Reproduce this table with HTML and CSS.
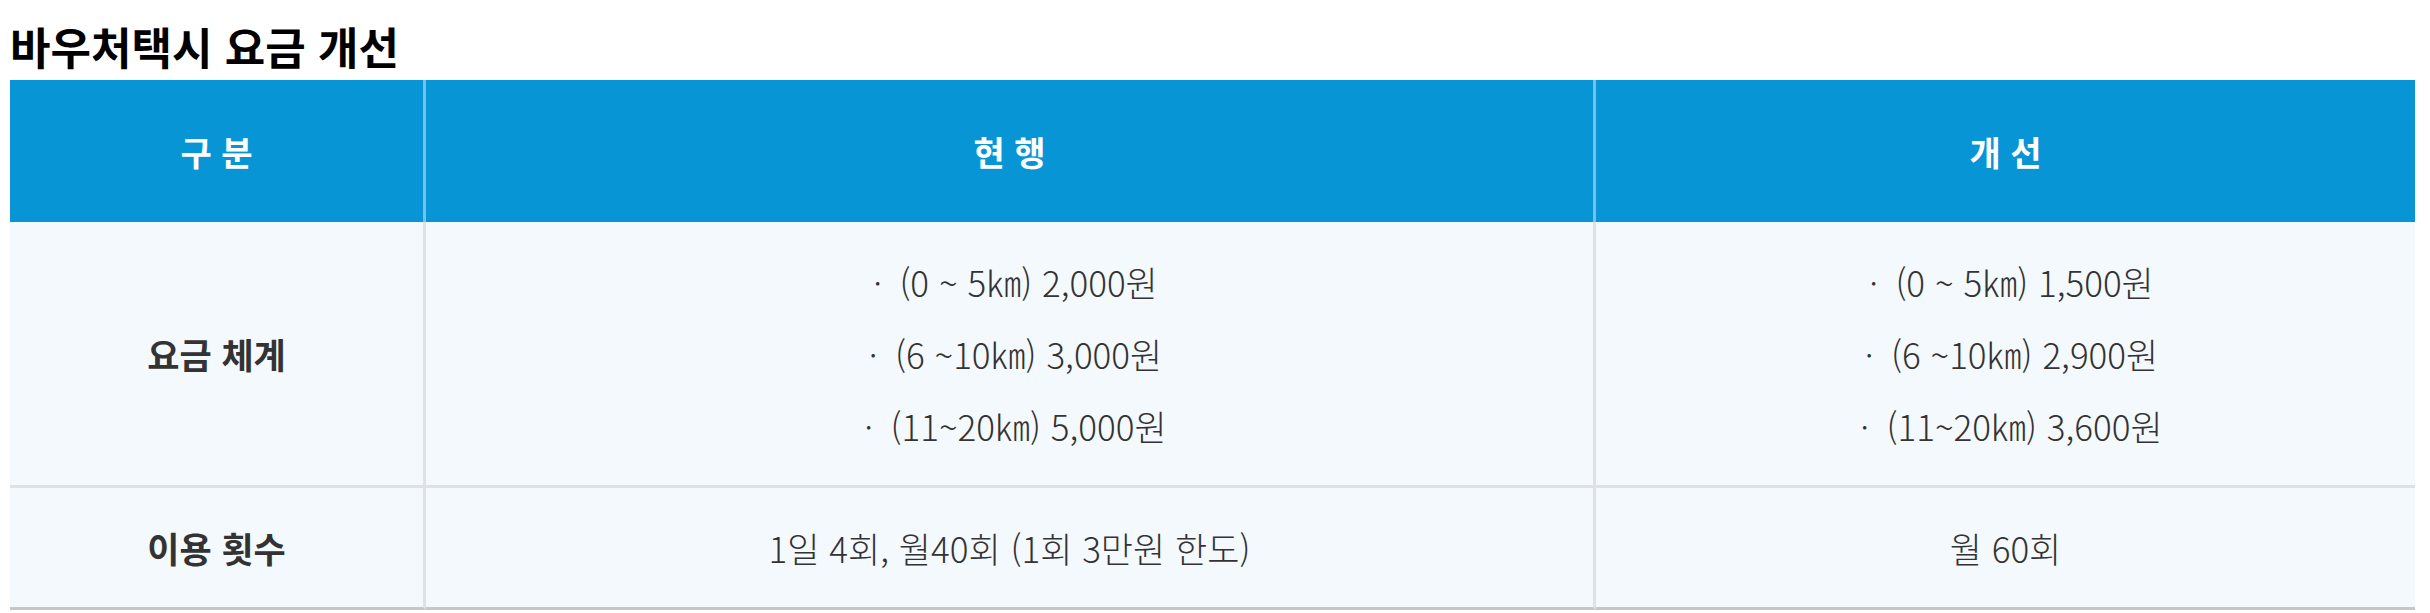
FILE: index.html
```html
<!DOCTYPE html>
<html lang="ko">
<head>
<meta charset="utf-8">
<title>바우처택시 요금 개선</title>
<link rel="stylesheet" href="styles.css">
</head>
<body>
<div class="page">
  <h2 class="title">바우처택시 요금 개선</h2>
  <div class="fare-table" role="table">
    <div class="cell head" role="columnheader">구 분</div>
    <div class="cell head" role="columnheader">현 행</div>
    <div class="cell head last" role="columnheader">개 선</div>

    <div class="cell label row1" role="rowheader">요금 체계</div>
    <div class="cell body row1" role="cell">
      <ul class="items">
        <li><span class="dot">ㆍ</span>(0 ~ 5㎞) 2,000원</li>
        <li><span class="dot">ㆍ</span>(6 ~10㎞) 3,000원</li>
        <li><span class="dot">ㆍ</span>(11~20㎞) 5,000원</li>
      </ul>
    </div>
    <div class="cell body row1 last" role="cell">
      <ul class="items">
        <li><span class="dot">ㆍ</span>(0 ~ 5㎞) 1,500원</li>
        <li><span class="dot">ㆍ</span>(6 ~10㎞) 2,900원</li>
        <li><span class="dot">ㆍ</span>(11~20㎞) 3,600원</li>
      </ul>
    </div>

    <div class="cell label row2" role="rowheader">이용 횟수</div>
    <div class="cell body row2" role="cell">1일 4회, 월40회 (1회 3만원 한도)</div>
    <div class="cell body row2 last" role="cell">월 60회</div>
  </div>
</div>
</body>
</html>
```

FILE: styles.css
```css
html, body {
  margin: 0;
  padding: 0;
  background: #ffffff;
}

body {
  font-family: "Noto Sans CJK KR", "Noto Sans", sans-serif;
  color: #333333;
}

.page {
  padding: 0 15px 0 10px;
}

.title {
  margin: 0;
  padding-top: 21px;
  height: 80px;
  box-sizing: border-box;
  font-size: 44px;
  line-height: 50px;
  font-weight: 700;
  color: #000000;
}

.fare-table {
  display: grid;
  grid-template-columns: 416px 1170px 1fr;
  grid-template-rows: 142px 266px 122px;
}

.cell {
  box-sizing: border-box;
  display: flex;
  align-items: center;
  justify-content: center;
  text-align: center;
  border-right: 3px solid #dfe1e5;
  background: #f4f9fd;
}

.cell.last {
  border-right: none;
}

.head {
  background: #0895d5;
  color: #ffffff;
  font-size: 34px;
  font-weight: 700;
  border-right-color: #74c1ee;
}

.label {
  font-size: 35px;
  font-weight: 700;
  color: #333333;
}

.body {
  font-size: 35px;
  font-weight: 300;
  color: #333333;
}

.row1 {
  border-bottom: 3px solid #dfe1e5;
}

.row2 {
  border-bottom: 3px solid #c6c7c9;
}

.items {
  list-style: none;
  margin: 0;
  padding: 0;
}

.items li {
  line-height: 72px;
}

.dot {
  margin-right: 6px;
}
```
